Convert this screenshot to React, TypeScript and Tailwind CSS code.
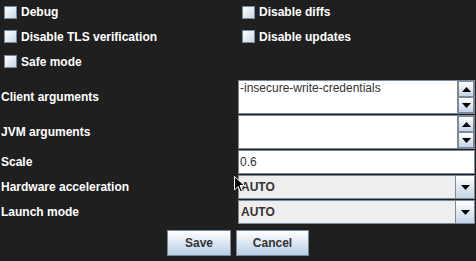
import React from 'react';

const font = { fontFamily: '"Liberation Sans", Arial, sans-serif' };

const CheckBox: React.FC<{ label: string }> = ({ label }) => (
    <label className="flex items-center gap-[4px] pl-[4px] text-[12px] font-bold text-white">
        <span className="w-[13px] h-[13px] border border-[#7a8a99] bg-gradient-to-br from-white to-[#c8d7e6]" />
        <span>{label}</span>
    </label>
);

const Arrow: React.FC<{ up?: boolean }> = ({ up }) => (
    <svg width="9" height="5" viewBox="0 0 9 5" className={up ? '' : 'rotate-180'}>
        <polygon points="0,5 9,5 4.5,0" fill="#000" />
    </svg>
);

const ArrowButton: React.FC<{ up?: boolean; className?: string }> = ({ up, className }) => (
    <div className={`flex items-center justify-center border border-[#7a8a99] bg-gradient-to-b from-white to-[#c4d5e6] ${className ?? ''}`}>
        <Arrow up={up} />
    </div>
);

const ScrollArea: React.FC<{ value: string }> = ({ value }) => (
    <div className="flex h-[34px] border border-[#7a8a99] bg-white">
        <div className="flex-1 pl-[1px] text-[12px] leading-[15px] text-[#333]">{value}</div>
        <div className="flex flex-col w-[17px] border-l border-[#7a8a99] bg-[#eeeeee]">
            <ArrowButton up className="h-[16px]" />
            <ArrowButton className="h-[16px]" />
        </div>
    </div>
);

const Combo: React.FC<{ value: string }> = ({ value }) => (
    <div className="flex h-[24px] border border-[#7a8a99] bg-[#eeeeee]">
        <div className="flex-1 flex items-center pl-[2px] text-[12px] font-bold text-[#333]">{value}</div>
        <ArrowButton className="w-[19px] border-y-0 border-r-0" />
    </div>
);

const Row: React.FC<{ label: string; children: React.ReactNode; className?: string }> = ({ label, children, className }) => (
    <div className={`grid grid-cols-[238px_1fr] items-center ${className ?? ''}`}>
        <span className="pl-[1px] text-[12px] font-bold text-white">{label}</span>
        {children}
    </div>
);

export default function App() {
    return (
        <div className="relative w-[476px] h-[261px] bg-[#1f1f1f] overflow-hidden" style={font}>
            <div className="grid grid-cols-[238px_1fr] grid-rows-[24px_25px_25px]">
                <CheckBox label="Debug" />
                <CheckBox label="Disable diffs" />
                <CheckBox label="Disable TLS verification" />
                <CheckBox label="Disable updates" />
                <CheckBox label="Safe mode" />
            </div>
            <div className="mt-[6px] flex flex-col gap-[1px] pr-[1px]">
                <Row label="Client arguments">
                    <ScrollArea value="-insecure-write-credentials" />
                </Row>
                <Row label="JVM arguments">
                    <ScrollArea value="" />
                </Row>
                <Row label="Scale">
                    <div className="h-[24px] flex items-center border border-[#7a8a99] bg-white pl-[1px] text-[12px] text-[#333]">0.6</div>
                </Row>
                <Row label="Hardware acceleration">
                    <Combo value="AUTO" />
                </Row>
                <Row label="Launch mode">
                    <Combo value="AUTO" />
                </Row>
            </div>
            <div className="mt-[6px] flex justify-center gap-[5px]">
                <button className="w-[64px] h-[26px] border border-[#7a8a99] bg-gradient-to-b from-white to-[#b8cfe5] text-[12px] font-bold text-[#333]">Save</button>
                <button className="w-[73px] h-[26px] border border-[#7a8a99] bg-gradient-to-b from-white to-[#b8cfe5] text-[12px] font-bold text-[#333]">Cancel</button>
            </div>
            <svg className="absolute left-[234px] top-[176px]" width="11" height="17" viewBox="0 0 11 17">
                <polygon points="0.5,0.5 0.5,14 4,10.5 6.5,16 8.5,15 6,9.5 10.5,9.5" fill="#000" stroke="#fff" strokeWidth="1" />
            </svg>
        </div>
    );
}
